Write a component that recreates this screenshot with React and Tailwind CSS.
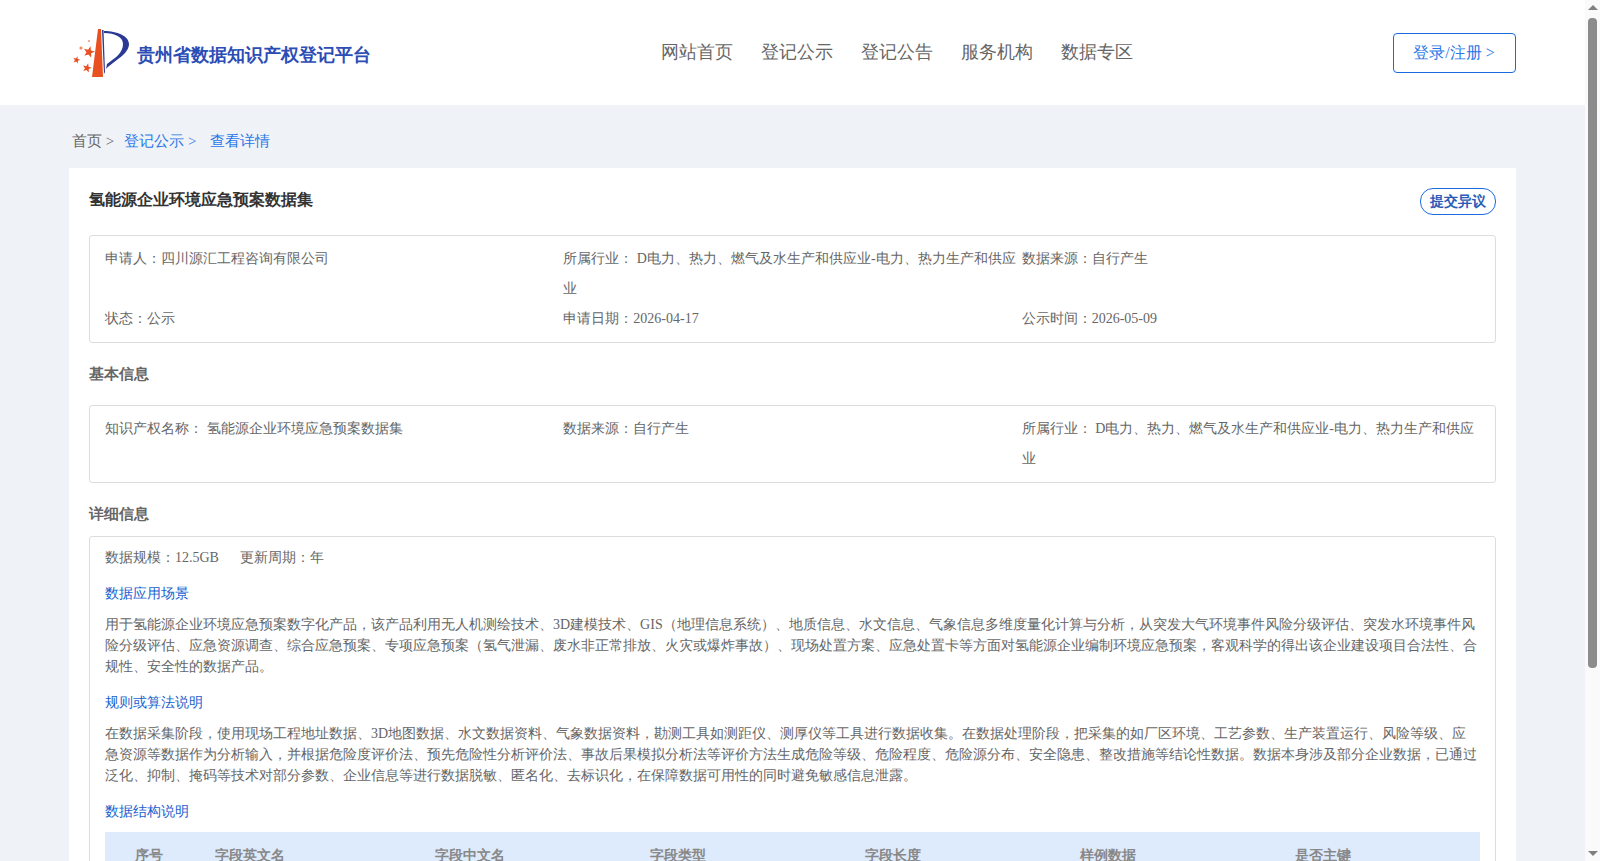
const serif = "font-['Liberation_Serif',serif]";
const bold = "font-['Liberation_Sans',sans-serif] font-bold";

function star(cx, cy, r) {
  const pts = [];
  for (let i = 0; i < 10; i++) {
    const a = -Math.PI / 2 + (i * Math.PI) / 5 + 0.25;
    const d = i % 2 === 0 ? r : r * 0.42;
    pts.push(`${(cx + d * Math.cos(a)).toFixed(2)},${(cy + d * Math.sin(a)).toFixed(2)}`);
  }
  return pts.join(" ");
}

function Logo() {
  return (
    <svg width="57" height="50" viewBox="0 0 57 50" className="shrink-0">
      <path d="M25 1 L28 1 L30 49 L19 49 Z" fill="#e8501f" />
      <path d="M29 2 L30.500 2 L32 44 L31 46 Z" fill="#2a3a94" />
      <path d="M31 3 C44 3 56 8 56 16 C56 26 42 32 33 41 L34 36 C42 30 50 25 50 16 C50 9 42 5 31 5 Z" fill="#2a3a94" />
      <polygon points={star(16, 24, 6)} fill="#e8501f" />
      <polygon points={star(3.5, 32, 3.8)} fill="#e8501f" />
      <polygon points={star(14, 40, 4.8)} fill="#e8501f" />
      <circle cx="8" cy="20" r="1.600" fill="#ef8a63" />
      <circle cx="16" cy="13" r="1.100" fill="#ef9b7a" />
    </svg>
  );
}

function Section({ children }) {
  return <div className="mt-[15px] text-[14px] leading-[21px] text-[#1a5fd0]">{children}</div>;
}

function Para({ children }) {
  return <p className="mt-[10px] text-[14px] leading-[21px] text-[#666]">{children}</p>;
}

function Scrollbar() {
  return (
    <div className="fixed right-0 top-0 w-[15px] h-[861px] bg-[#fafafa]">
      <div className="absolute left-[3px] top-[5px] w-0 h-0 border-x-[5px] border-x-transparent border-b-[5px] border-b-[#808080]" />
      <div className="absolute left-[3px] top-[18px] w-[9px] h-[650px] rounded-[4px] bg-[#8c8c8c]" />
      <div className="absolute left-[3px] bottom-[5px] w-0 h-0 border-x-[5px] border-x-transparent border-t-[5px] border-t-[#808080]" />
    </div>
  );
}

export default function App() {
  const head = ["序号", "字段英文名", "字段中文名", "字段类型", "字段长度", "样例数据", "是否主键"];
  return (
    <div className={`${serif} relative h-[861px] overflow-hidden bg-white text-[#666]`}>
      <div className="w-[1585px] h-full bg-[#eff2f6]">
        <header className="h-[105px] bg-white flex items-center justify-between pl-[73px] pr-[69px]">
          <div className="flex items-center gap-[7px] w-[300px] shrink-0">
            <Logo />
            <span className={`${bold} text-[18px] text-[#2b4db5] whitespace-nowrap mt-[5px]`}>贵州省数据知识产权登记平台</span>
          </div>
          <nav className="flex gap-[28px] text-[18px] text-[#666] ml-[27px]">
            <span>网站首页</span>
            <span>登记公示</span>
            <span>登记公告</span>
            <span>服务机构</span>
            <span>数据专区</span>
          </nav>
          <button className="w-[123px] h-[40px] border border-[#1a6ae0] rounded-[4px] pt-[1px] pr-[1px] text-[16px] text-[#2a78e8] bg-white">登录/注册 &gt;</button>
        </header>

        <div className="pl-[69px] pr-[69px]">
          <div className="h-[63px] flex items-center pl-[3px] text-[15px] pt-[9px]">
            <span className="text-[#666]">首页 &gt;</span>
            <span className="ml-[10px] text-[#2a78e8]">登记公示 &gt;</span>
            <span className="ml-[14px] text-[#2a78e8]">查看详情</span>
          </div>

          <main className="bg-white px-[20px] pb-[20px]">
            <div className="flex items-start justify-between pt-[20px]">
              <h1 className={`${bold} text-[16px] leading-[24px] text-[#333]`}>氢能源企业环境应急预案数据集</h1>
              <button className={`${bold} w-[76px] h-[27px] border border-[#1a6ae0] rounded-[13px] text-[14px] text-[#2b5bb5]`}>提交异议</button>
            </div>

            <div className="mt-[20px] border border-[#ddd] rounded-[3px] px-[15px] py-[8px] grid grid-cols-3 text-[14px] leading-[30px] text-[#666]">
              <div>申请人：四川源汇工程咨询有限公司</div>
              <div>所属行业： D电力、热力、燃气及水生产和供应业-电力、热力生产和供应业</div>
              <div>数据来源：自行产生</div>
              <div>状态：公示</div>
              <div>申请日期：2026-04-17</div>
              <div>公示时间：2026-05-09</div>
            </div>

            <h2 className={`${bold} mt-[19px] text-[15px] leading-[24px] text-[#666]`}>基本信息</h2>

            <div className="mt-[19px] border border-[#ddd] rounded-[3px] px-[15px] py-[8px] grid grid-cols-3 text-[14px] leading-[30px] text-[#666]">
              <div>知识产权名称： 氢能源企业环境应急预案数据集</div>
              <div>数据来源：自行产生</div>
              <div>所属行业： D电力、热力、燃气及水生产和供应业-电力、热力生产和供应业</div>
            </div>

            <h2 className={`${bold} mt-[19px] text-[15px] leading-[24px] text-[#666]`}>详细信息</h2>

            <div className="mt-[10px] border border-[#ddd] rounded-[3px] px-[15px] pt-[10px] pb-[20px]">
              <div className="flex gap-[21px] text-[14px] leading-[21px] text-[#666]">
                <span>数据规模：12.5GB</span>
                <span>更新周期：年</span>
              </div>
              <Section>数据应用场景</Section>
              <Para>用于氢能源企业环境应急预案数字化产品，该产品利用无人机测绘技术、3D建模技术、GIS（地理信息系统）、地质信息、水文信息、气象信息多维度量化计算与分析，从突发大气环境事件风险分级评估、突发水环境事件风险分级评估、应急资源调查、综合应急预案、专项应急预案（氢气泄漏、废水非正常排放、火灾或爆炸事故）、现场处置方案、应急处置卡等方面对氢能源企业编制环境应急预案，客观科学的得出该企业建设项目合法性、合规性、安全性的数据产品。</Para>
              <Section>规则或算法说明</Section>
              <Para>在数据采集阶段，使用现场工程地址数据、3D地图数据、水文数据资料、气象数据资料，勘测工具如测距仪、测厚仪等工具进行数据收集。在数据处理阶段，把采集的如厂区环境、工艺参数、生产装置运行、风险等级、应急资源等数据作为分析输入，并根据危险度评价法、预先危险性分析评价法、事故后果模拟分析法等评价方法生成危险等级、危险程度、危险源分布、安全隐患、整改措施等结论性数据。数据本身涉及部分企业数据，已通过泛化、抑制、掩码等技术对部分参数、企业信息等进行数据脱敏、匿名化、去标识化，在保障数据可用性的同时避免敏感信息泄露。</Para>
              <Section>数据结构说明</Section>
              <div className={`${bold} mt-[10px] h-[46px] bg-[#deebfd] grid grid-cols-[109.5px_220px_215px_215px_215px_215px_1fr] items-center text-[14px] text-[#888]`}>
                {head.map((h, i) => (
                  <div key={h} className={i === 0 ? "pl-[30px]" : ""}>{h}</div>
                ))}
              </div>
            </div>
          </main>
        </div>
      </div>
      <Scrollbar />
    </div>
  );
}
